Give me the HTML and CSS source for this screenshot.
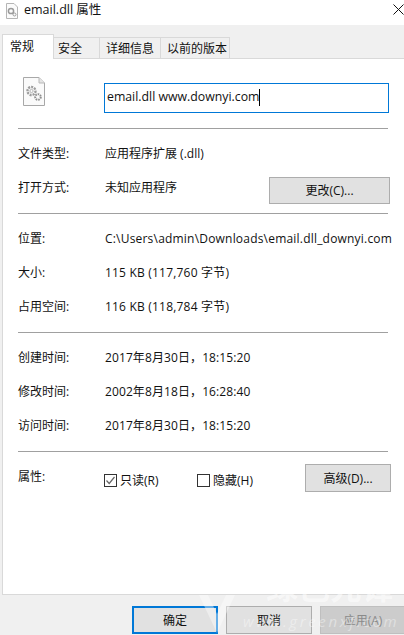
FILE: index.html
```html
<!DOCTYPE html>
<html>

<head>
	<title>email.dll 属性</title>
	<meta charset="UTF-8">
	<link rel="stylesheet" href="styles.css">
</head>

<body>
	<div class="window">
		<div class="titlebar">
			<svg class="title-icon" width="14" height="16" viewBox="0 0 14 16">
				<path d="M1.5 0.5H9L12.5 4V15.5H1.5Z" fill="#fbfbfb" stroke="#b5b5b5" />
				<circle cx="6" cy="8" r="2.6" fill="none" stroke="#9a9a9a" stroke-width="1.5" />
				<circle cx="9.5" cy="11.5" r="1.5" fill="none" stroke="#9a9a9a" />
			</svg>
			<span class="title-text">email.dll 属性</span>
			<svg class="close-icon" width="11" height="11" viewBox="0 0 11 11">
				<path d="M0.5 0.5L10.5 10.5M10.5 0.5L0.5 10.5" stroke="#111" fill="none" />
			</svg>
		</div>

		<div class="tabs">
			<div class="tab tab-active">常规</div>
			<div class="tab tab-safe">安全</div>
			<div class="tab tab-detail">详细信息</div>
			<div class="tab tab-prev">以前的版本</div>
		</div>

		<div class="panel">
			<div class="name-row">
				<svg class="file-icon" width="22" height="29" viewBox="0 0 22 29">
					<path d="M0.5 0.5H16L21.5 6V28.5H0.5Z" fill="#fafafa" stroke="#a8a8a8" />
					<path d="M16 0.5V6H21.5" fill="#e4e4e4" stroke="#b8b8b8" />
					<circle cx="8.5" cy="14" r="4" fill="none" stroke="#9c9c9c" stroke-width="2.4" stroke-dasharray="2 1" />
					<circle cx="8.5" cy="14" r="1.6" fill="none" stroke="#b5b5b5" />
					<circle cx="15" cy="20" r="2.8" fill="none" stroke="#8f8f8f" stroke-width="2" stroke-dasharray="1.6 0.9" />
				</svg>
				<div class="name-input">email.dll www.downyi.com<span class="caret"></span></div>
			</div>
			<div class="sep"></div>

			<div class="group">
				<div class="row">
					<span class="label">文件类型:</span>
					<span class="value">应用程序扩展 (.dll)</span>
				</div>
				<div class="row">
					<span class="label">打开方式:</span>
					<span class="value">未知应用程序</span>
					<div class="btn btn-change">更改(C)...</div>
				</div>
			</div>
			<div class="sep"></div>

			<div class="group">
				<div class="row">
					<span class="label">位置:</span>
					<span class="value value-wide">C:\Users\admin\Downloads\email.dll_downyi.com</span>
				</div>
				<div class="row">
					<span class="label">大小:</span>
					<span class="value value-wide">115 KB (117,760 字节)</span>
				</div>
				<div class="row">
					<span class="label">占用空间:</span>
					<span class="value value-wide">116 KB (118,784 字节)</span>
				</div>
			</div>
			<div class="sep"></div>

			<div class="group">
				<div class="row">
					<span class="label">创建时间:</span>
					<span class="value value-date">2017年8月30日，18:15:20</span>
				</div>
				<div class="row">
					<span class="label">修改时间:</span>
					<span class="value value-date">2002年8月18日，16:28:40</span>
				</div>
				<div class="row">
					<span class="label">访问时间:</span>
					<span class="value value-date">2017年8月30日，18:15:20</span>
				</div>
			</div>
			<div class="sep"></div>

			<div class="attr-row">
				<span class="label attr-label">属性:</span>
				<div class="check check-read">
					<svg class="box" width="13" height="13" viewBox="0 0 13 13">
						<rect x="0.5" y="0.5" width="12" height="12" fill="#fff" stroke="#333" />
						<path d="M2.5 6.5L5.2 9.5L10.5 3" fill="none" stroke="#666" stroke-width="1.2" />
					</svg>
					<span>只读(R)</span>
				</div>
				<div class="check check-hidden">
					<svg class="box" width="13" height="13" viewBox="0 0 13 13">
						<rect x="0.5" y="0.5" width="12" height="12" fill="#fff" stroke="#333" />
					</svg>
					<span>隐藏(H)</span>
				</div>
				<div class="btn btn-adv">高级(D)...</div>
			</div>
		</div>

		<div class="footer">
			<div class="btn btn-foot btn-ok">确定</div>
			<div class="btn btn-foot">取消</div>
			<div class="btn btn-foot btn-apply">应用(A)</div>
		</div>

		<!-- watermark on top of the bottom bar -->
		<svg class="wm-logo" width="38" height="40" viewBox="0 0 38 40">
			<path d="M1 0L19 38L37 0H28L19 19L10 0Z" fill="#fff" fill-opacity="0.4" />
		</svg>
		<div class="wm-name">绿色先锋</div>
		<div class="wm-text">www.greenxf.com</div>
	</div>
</body>

</html>
```

FILE: styles.css
```css
* {
	box-sizing: border-box;
}

body {
	margin: 0;
	padding: 0;
	font-family: "Open Sans", "Noto Sans CJK SC", sans-serif;
	font-size: 12px;
	color: #111;
	background-color: #fff;
}

.window {
	position: relative;
	width: 404px;
	height: 635px;
	overflow: hidden;
	background-color: #f0f0f0;
	display: flex;
	flex-direction: column;
}

.titlebar {
	height: 25px;
	flex: none;
	background-color: #fff;
	display: flex;
	align-items: flex-start;
	padding: 3px 0 0 5px;
}

.title-icon {
	flex: none;
}

.title-text {
	margin-left: 5px;
	font-size: 12.5px;
	line-height: 14px;
	flex: 1;
}

.close-icon {
	flex: none;
	margin-top: 1px;
}

.tabs {
	height: 34px;
	flex: none;
	display: flex;
	align-items: flex-end;
	padding: 0 0 0 2px;
	margin-bottom: -1px;
	position: relative;
	z-index: 1;
}

.tab {
	height: 22px;
	border: 1px solid #d9d9d9;
	border-left: 0;
	background-color: #f0f0f0;
	display: flex;
	align-items: center;
	padding-bottom: 1px;
	font-size: 12px;
}

.tab-active {
	height: 25px;
	width: 52px;
	padding-left: 7px;
	background-color: #fff;
	border-left: 1px solid #d9d9d9;
	border-bottom: 0;
	padding-bottom: 2px;
}

.tab-safe {
	width: 46px;
	padding-left: 4px;
}

.tab-detail {
	width: 61px;
	padding-left: 6px;
}

.tab-prev {
	width: 69px;
	padding-left: 6px;
}

.panel {
	height: 537px;
	flex: none;
	margin-left: 2px;
	background-color: #fff;
	border: 1px solid #d9d9d9;
	border-right: 0;
	padding: 0 15px;
}

.name-row {
	height: 69px;
	display: flex;
	align-items: flex-start;
	padding-top: 18px;
}

.file-icon {
	margin-left: 5px;
	flex: none;
}

.name-input {
	margin-left: 59px;
	margin-top: 6px;
	width: 287px;
	height: 30px;
	border: 1px solid #0078d7;
	font-size: 12.3px;
	line-height: 26px;
	padding-left: 2px;
	background-color: #fff;
	display: flex;
}

.caret {
	width: 1px;
	height: 17px;
	margin-top: 5px;
	background-color: #000;
}

.sep {
	height: 1px;
	width: 370px;
	background-color: #a0a0a0;
}

.group {
	padding: 8px 0;
}

.row {
	height: 34px;
	display: flex;
	align-items: center;
	padding-bottom: 2px;
}

.label {
	width: 87px;
	flex: none;
}

.value {
	flex: none;
	white-space: nowrap;
}

.value-wide {
	letter-spacing: 0.2px;
}

.value-date {
	letter-spacing: 0.1px;
}

.btn {
	height: 27px;
	flex: none;
	background-color: #e1e1e1;
	border: 1px solid #adadad;
	display: flex;
	align-items: center;
	justify-content: center;
}

.btn-change {
	width: 121px;
	margin-left: auto;
	margin-right: -1px;
	margin-top: 6px;
}

.attr-row {
	display: flex;
	align-items: flex-start;
	padding-top: 12px;
}

.attr-label {
	width: 86px;
	margin-top: 3px;
}

.check {
	flex: none;
	display: flex;
	align-items: center;
	gap: 3px;
	margin-top: 7px;
}

.check-read {
	width: 93px;
}

.check-hidden {
	width: 108px;
}

.box {
	flex: none;
}

.btn-adv {
	width: 86px;
	height: 28px;
}

.footer {
	flex: 1;
	display: flex;
	justify-content: flex-end;
	gap: 8px;
	padding: 11px 0 0;
	margin-right: -2px;
}

.btn-foot {
	width: 86px;
	height: 28px;
}

.btn-ok {
	border: 2px solid #0078d7;
}

.btn-apply {
	color: #8a8a8a;
	background-color: #ccc;
	border-color: #bfbfbf;
}

.wm-logo {
	position: absolute;
	left: 198px;
	top: 595px;
}

.wm-name {
	position: absolute;
	left: 266px;
	top: 571px;
	font-size: 32px;
	font-weight: bold;
	line-height: 32px;
	color: rgba(255, 255, 255, 0.55);
}

.wm-text {
	position: absolute;
	left: 243px;
	top: 611px;
	font-family: "Open Sans", sans-serif;
	font-style: italic;
	font-size: 15px;
	letter-spacing: 2.6px;
	color: rgba(255, 255, 255, 0.4);
}
```
